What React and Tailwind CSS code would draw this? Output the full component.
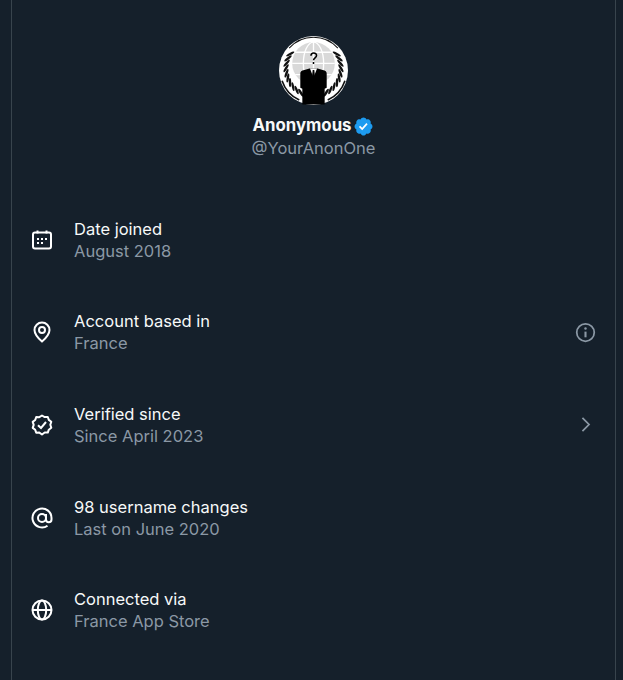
import React from "react";

// wreath leaves, placed along an arc round the globe
const leaves = Array.from({ length: 10 }, (_, i) => {
  const angle = 212 - i * 10.5;
  const rad = (angle * Math.PI) / 180;
  return { x: 27 * Math.cos(rad), y: 27 * Math.sin(rad), angle };
});

const Avatar = () => (
  <svg viewBox="0 0 68 68" className="w-[69px] h-[69px]">
    <circle cx="34" cy="34" r="34" fill="#fff" />
    <path d="M10 12A32 32 0 0 1 58 12" fill="none" stroke="#111" strokeWidth="1" />
    <path d="M3 44A32 32 0 0 0 20 63M65 44A32 32 0 0 1 48 63" fill="none" stroke="#111" strokeWidth="1.600" />
    <circle cx="34" cy="27" r="21" fill="#d9d9d9" />
    <g fill="none" stroke="#fff" strokeWidth="1.300">
      <ellipse cx="34" cy="27" rx="10" ry="21" />
      <path d="M34 6v42M13 27h42M16 16h36M16 38h36" />
    </g>
    <g fill="#111">
      {leaves.map((l, i) => (
        <g key={i}>
          <ellipse cx={34 + l.x} cy={32 + l.y} rx="1.200" ry="4.500" transform={`rotate(${l.angle + 30} ${34 + l.x} ${32 + l.y})`} />
          <ellipse cx={34 - l.x} cy={32 + l.y} rx="1.200" ry="4.500" transform={`rotate(${-l.angle - 30} ${34 - l.x} ${32 + l.y})`} />
        </g>
      ))}
    </g>
    <path d="M21 37c0-2 1-3 4-3.500l5-1.500h8l5 1.500c3 .5 4 1.500 4 3.500v14l-2 1v15.500H23V52l-2-1z" fill="#000" />
    <path d="M30.500 32l3.500 9 3.500-9z" fill="#fff" />
    <path d="M33.200 33.500h1.600l.7 7-1.500 2-1.500-2z" fill="#000" />
    <path d="M31.500 19.500c0-3.500 5.500-3.500 5.500-.3 0 2.300-3 2.300-3 4.800M34 25.500v2" fill="none" stroke="#000" strokeWidth="1.500" />
  </svg>
);

const VerifiedBadge = () => (
  <svg viewBox="0 0 22 22" className="w-[21px] h-[21px]">
    <path
      fill="#1d9bf0"
      d="M20.396 11c-.018-.646-.215-1.275-.57-1.816-.354-.54-.852-.972-1.438-1.246.223-.607.27-1.264.14-1.897-.131-.634-.437-1.218-.882-1.687-.47-.445-1.053-.75-1.687-.882-.633-.13-1.29-.083-1.897.14-.273-.587-.704-1.086-1.245-1.44S11.647 1.62 11 1.604c-.646.017-1.273.213-1.813.568s-.969.854-1.24 1.44c-.608-.223-1.267-.272-1.902-.14-.635.13-1.22.436-1.69.882-.445.47-.749 1.055-.878 1.688-.13.633-.08 1.29.144 1.896-.587.274-1.087.705-1.443 1.245-.356.54-.555 1.17-.574 1.817.02.647.218 1.276.574 1.817.356.54.856.972 1.443 1.245-.224.606-.274 1.263-.144 1.896.13.634.433 1.218.877 1.688.47.443 1.054.747 1.687.878.633.132 1.29.084 1.897-.136.274.586.705 1.084 1.246 1.439.54.354 1.17.551 1.816.569.647-.016 1.276-.213 1.817-.567s.972-.854 1.245-1.44c.604.239 1.266.296 1.903.164.636-.132 1.22-.447 1.68-.907.46-.46.776-1.044.908-1.681s.075-1.299-.165-1.903c.586-.274 1.084-.705 1.439-1.246.354-.54.551-1.17.569-1.816z"
    />
    <path fill="#fff" d="M9.662 14.85l-3.429-3.428 1.293-1.302 2.072 2.072 4.4-4.794 1.347 1.246z" />
  </svg>
);

const iconProps = {
  viewBox: "0 0 24 24",
  className: "w-[24px] h-[24px]",
  fill: "none",
  stroke: "#fff",
  strokeWidth: 2,
};

const CalendarIcon = () => (
  <svg {...iconProps}>
    <rect x="3" y="4.500" width="18" height="16" rx="2" />
    <path d="M7.500 2.500v3M16.500 2.500v3" />
    <path d="M7 11h2M11 11h2M15 11h2M7 15h2M11 15h2" strokeWidth="1.800" />
  </svg>
);

const PinIcon = () => (
  <svg {...iconProps}>
    <path d="M12 21.500c-1.500-1.300-7.500-6.500-7.500-11.500a7.500 7.500 0 0 1 15 0c0 5-6 10.200-7.500 11.500z" />
    <circle cx="12" cy="10" r="3" />
  </svg>
);

const VerifiedIcon = () => (
  <svg {...iconProps}>
    <path d="M12 2.500l2.700 1.600 3.100-.1 1 2.900 2.500 1.900-1 3 1 3-2.500 1.900-1 2.900-3.100-.1L12 21.500l-2.700-1.900-3.100.1-1-2.900-2.500-1.900 1-3-1-3 2.500-1.900 1-2.900 3.100.1z" strokeLinejoin="round" />
    <path d="M8 12.200l3 2.800 5-6" />
  </svg>
);

const AtIcon = () => (
  <svg {...iconProps}>
    <circle cx="12" cy="12" r="4" />
    <path d="M16 8v5.500a2.750 2.750 0 0 0 5.500 0V12a9.500 9.500 0 1 0-4 7.700" />
  </svg>
);

const GlobeIcon = () => (
  <svg {...iconProps}>
    <circle cx="12" cy="12" r="9.500" />
    <ellipse cx="12" cy="12" rx="4.200" ry="9.500" />
    <path d="M2.500 12h19" />
  </svg>
);

const InfoIcon = () => (
  <svg viewBox="0 0 24 24" className="w-[21px] h-[21px]" fill="none" stroke="#8b98a5" strokeWidth="2">
    <circle cx="12" cy="12" r="10" />
    <path d="M12 11v6.500" strokeWidth="2.400" />
    <circle cx="12" cy="7.500" r="1.400" fill="#8b98a5" stroke="none" />
  </svg>
);

const ChevronIcon = () => (
  <svg viewBox="0 0 24 24" className="w-[21px] h-[21px]" fill="none" stroke="#8b98a5" strokeWidth="2">
    <path d="M8.500 4.500l7.500 7.500-7.500 7.500" />
  </svg>
);

const rows = [
  { icon: <CalendarIcon />, title: "Date joined", sub: "August 2018" },
  { icon: <PinIcon />, title: "Account based in", sub: "France", right: <InfoIcon /> },
  { icon: <VerifiedIcon />, title: "Verified since", sub: "Since April 2023", right: <ChevronIcon /> },
  { icon: <AtIcon />, title: "98 username changes", sub: "Last on June 2020" },
  { icon: <GlobeIcon />, title: "Connected via", sub: "France App Store" },
];

const App = () => {
  return (
    <div className="w-[623px] h-[680px] overflow-hidden bg-[#15202b] font-['Inter',sans-serif]">
      <div className="ml-[11px] w-[605px] h-full border-x border-[#38444d]">
        <div className="flex flex-col items-center pt-9">
          <Avatar />
          <div className="flex items-center gap-[2px] mt-[10px] h-[22px]">
            <span className="text-[16.8px] font-bold text-[#f7f9f9]">Anonymous</span>
            <VerifiedBadge />
          </div>
          <p className="text-[16.5px] leading-[23px] text-[#8b98a5]">@YourAnonOne</p>
        </div>
        <div className="mt-[57.8px] flex flex-col gap-[48.6px]">
          {rows.map((row) => (
            <div key={row.title} className="flex items-center h-[44px] pl-[18px] pr-[19px]">
              <div className="w-[24px] flex justify-center">{row.icon}</div>
              <div className="ml-[20px] flex-1">
                <p className="text-[16.5px] leading-[22px] text-[#f7f9f9]">{row.title}</p>
                <p className="text-[16.5px] leading-[22px] text-[#8b98a5]">{row.sub}</p>
              </div>
              {row.right}
            </div>
          ))}
        </div>
      </div>
    </div>
  );
};

export default App;
